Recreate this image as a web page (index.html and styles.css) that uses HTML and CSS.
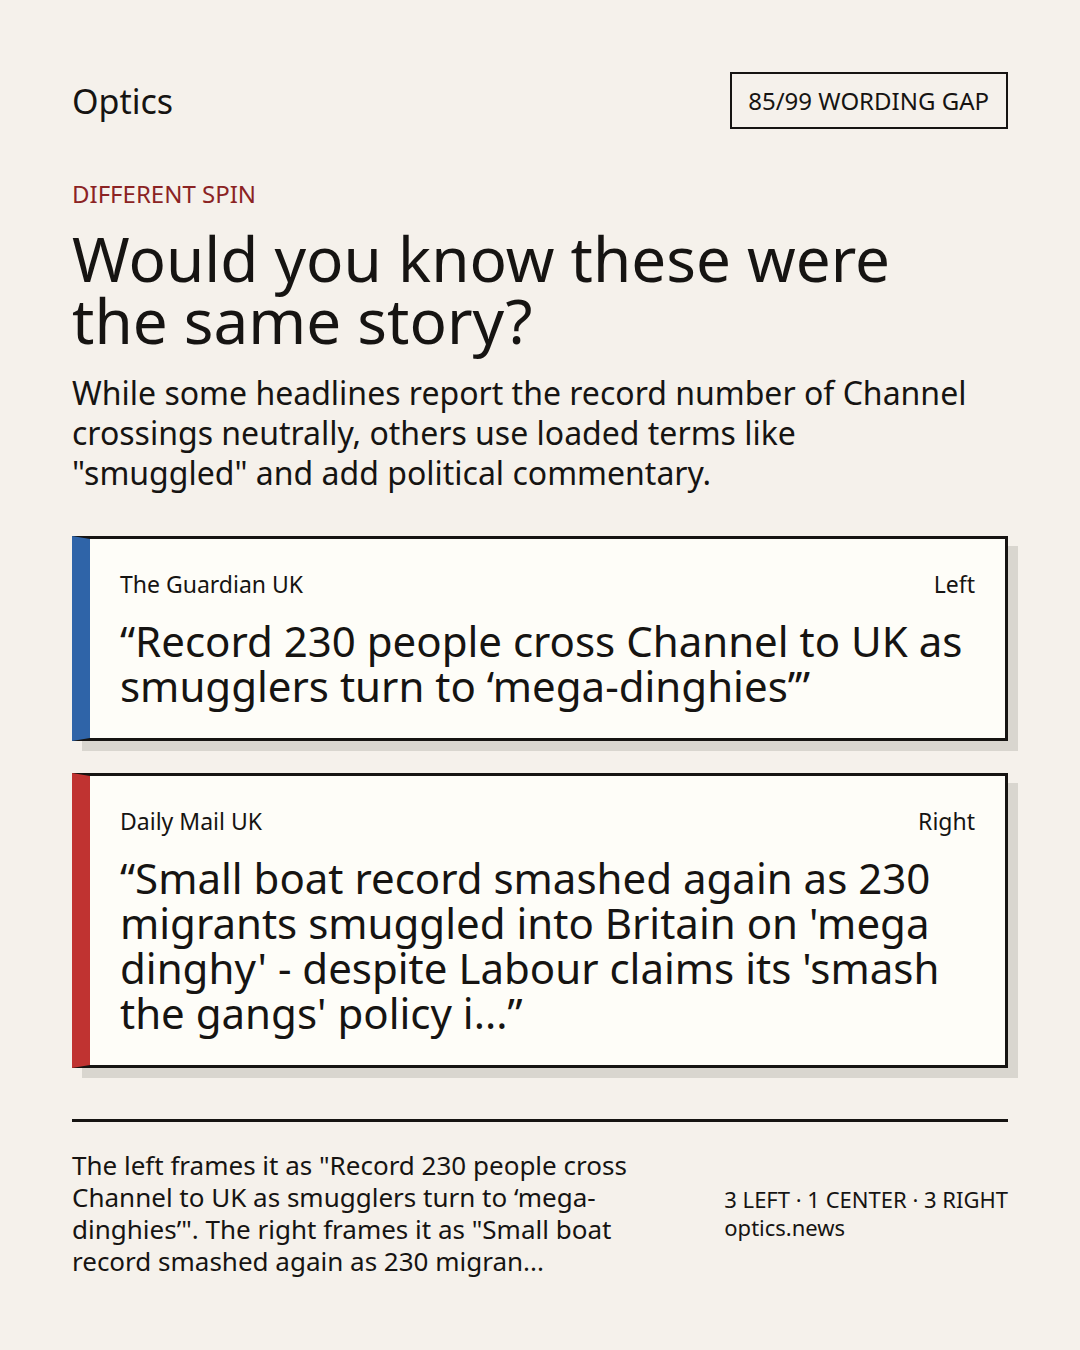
FILE: index.html
```html
<!DOCTYPE html>
<html lang="en">
<head>
<meta charset="utf-8">
<title>Optics</title>
<link rel="stylesheet" href="styles.css">
</head>
<body>
<main class="page">
  <header class="top">
    <div class="brand">Optics</div>
    <div class="badge">85/99 WORDING GAP</div>
  </header>
  <div class="kicker">DIFFERENT SPIN</div>
  <h1 class="title">Would you know these were the same story?</h1>
  <p class="lede">While some headlines report the record number of Channel crossings neutrally, others use loaded terms like "smuggled" and add political commentary.</p>
  <section class="cards">
    <article class="card card-left">
      <div class="meta"><span>The Guardian UK</span><span>Left</span></div>
      <div class="quote">“Record 230 people cross Channel to UK as smugglers turn to ‘mega-dinghies’”</div>
    </article>
    <article class="card card-right">
      <div class="meta"><span>Daily Mail UK</span><span>Right</span></div>
      <div class="quote">“Small boat record smashed again as 230 migrants smuggled into Britain on 'mega dinghy' - despite Labour claims its 'smash the gangs' policy i...”</div>
    </article>
  </section>
  <footer class="foot">
    <p class="summary">The left frames it as "Record 230 people cross Channel to UK as smugglers turn to ‘mega-dinghies’". The right frames it as "Small boat record smashed again as 230 migran...</p>
    <div class="stats">
      <div>3 LEFT · 1 CENTER · 3 RIGHT</div>
      <div>optics.news</div>
    </div>
  </footer>
</main>
</body>
</html>
```

FILE: styles.css
```css
html, body {
  margin: 0;
  padding: 0;
}
body {
  background: #f5f1eb;
  color: #161412;
  font-family: "Noto Sans", "Open Sans", sans-serif;
  width: 1080px;
  height: 1350px;
  overflow: hidden;
}
.page {
  padding: 72px 72px 0 72px;
  display: flex;
  flex-direction: column;
}
.top {
  display: flex;
  justify-content: space-between;
  align-items: center;
  height: 57px;
}
.brand {
  font-size: 34px;
  line-height: 40px;
}
.badge {
  box-sizing: border-box;
  height: 57px;
  border: 2px solid #161412;
  padding: 0 17px 0 16px;
  font-size: 24px;
  display: flex;
  align-items: center;
}
.kicker {
  margin-top: 50px;
  font-size: 24px;
  line-height: 30px;
  color: #8b2323;
}
.title {
  margin: 18px 0 0 0;
  max-width: 900px;
  font-weight: 400;
  font-size: 62px;
  line-height: 62px;
}
.lede {
  margin: 22px 0 0 0;
  max-width: 900px;
  font-size: 32px;
  line-height: 40px;
}
.cards {
  margin-top: 43px;
  display: flex;
  flex-direction: column;
  gap: 32px;
}
.card {
  background: #fefdf8;
  border: 3px solid #161412;
  border-left: 18px solid #2f64a8;
  box-shadow: 10px 10px 0 #d9d6cf;
  padding: 30px;
  display: flex;
  flex-direction: column;
  gap: 19px;
}
.card-right {
  border-left-color: #c03331;
}
.meta {
  display: flex;
  justify-content: space-between;
  font-size: 23px;
  line-height: 30px;
}
.quote {
  font-size: 42px;
  line-height: 45px;
}
.foot {
  margin-top: 51px;
  border-top: 3px solid #161412;
  padding-top: 27px;
  display: flex;
  justify-content: space-between;
  align-items: center;
}
.summary {
  margin: 0;
  width: 590px;
  font-size: 26px;
  line-height: 32px;
}
.stats {
  font-size: 22px;
  line-height: 28px;
}
```
